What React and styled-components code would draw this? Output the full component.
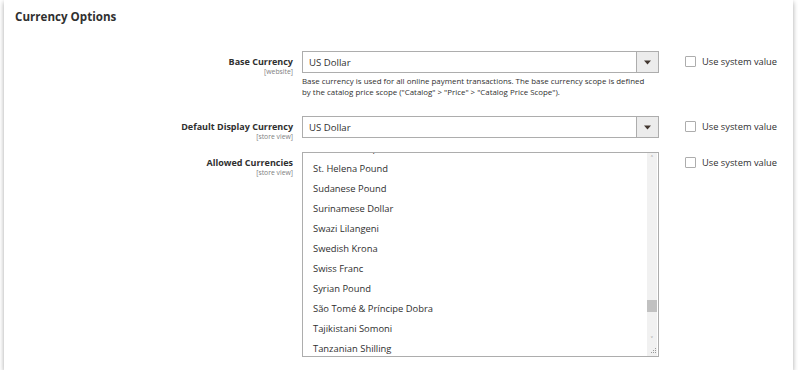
import React from 'react'
import styled, { createGlobalStyle } from 'styled-components'

const GlobalStyle = createGlobalStyle`
body{
    margin:0;
    background:#fff;
    font-family:"Open Sans", "Noto Sans", sans-serif;
    color:#303030;
}
`;

const currencies = [
    'Sri Lankan Rupee',
    'St. Helena Pound',
    'Sudanese Pound',
    'Surinamese Dollar',
    'Swazi Lilangeni',
    'Swedish Krona',
    'Swiss Franc',
    'Syrian Pound',
    'São Tomé & Príncipe Dobra',
    'Tajikistani Somoni',
    'Tanzanian Shilling',
];

function Caret() {
    return (
        <svg width="7" height="5" viewBox="0 0 7 5">
            <path d="M0 0.5h7L3.5 4.5z" fill="#41362f" />
        </svg>
    )
}

function UseSystem() {
    return (
        <SystemValue>
            <Box />
            <span>Use system value</span>
        </SystemValue>
    )
}

function App() {
    return (
        <>
            <GlobalStyle />
            <Card>
                <Title>Currency Options</Title>
                <Rows>
                    <Row gap={18}>
                        <Label>
                            <strong>Base Currency</strong>
                            <small>[website]</small>
                        </Label>
                        <Field>
                            <Select>
                                <span>US Dollar</span>
                                <Arrow><Caret /></Arrow>
                            </Select>
                            <Note>
                                Base currency is used for all online payment transactions. The base currency scope is defined by the catalog price scope ("Catalog" &gt; "Price" &gt; "Catalog Price Scope").
                            </Note>
                        </Field>
                        <UseSystem />
                    </Row>
                    <Row gap={14}>
                        <Label>
                            <strong>Default Display Currency</strong>
                            <small>[store view]</small>
                        </Label>
                        <Field>
                            <Select>
                                <span>US Dollar</span>
                                <Arrow><Caret /></Arrow>
                            </Select>
                        </Field>
                        <UseSystem />
                    </Row>
                    <Row>
                        <Label>
                            <strong>Allowed Currencies</strong>
                            <small>[store view]</small>
                        </Label>
                        <Field>
                            <MultiSelect>
                                <Options>
                                    <OptionsInner>
                                        {currencies.map(c => <Option key={c}>{c}</Option>)}
                                    </OptionsInner>
                                </Options>
                                <Scrollbar>
                                    <ScrollArrow>&#708;</ScrollArrow>
                                    <Track>
                                        <Thumb style={{ top: '135px' }} />
                                    </Track>
                                    <ScrollArrow>&#709;</ScrollArrow>
                                    <Grip>
                                        <svg width="6" height="6" viewBox="0 0 6 6">
                                            <rect x="4" y="0" width="1" height="1" fill="#999" />
                                            <rect x="2" y="2" width="1" height="1" fill="#999" />
                                            <rect x="4" y="2" width="1" height="1" fill="#999" />
                                            <rect x="0" y="4" width="1" height="1" fill="#999" />
                                            <rect x="2" y="4" width="1" height="1" fill="#999" />
                                            <rect x="4" y="4" width="1" height="1" fill="#999" />
                                        </svg>
                                    </Grip>
                                </Scrollbar>
                            </MultiSelect>
                        </Field>
                        <UseSystem />
                    </Row>
                </Rows>
            </Card>
        </>
    )
}

export default App

const Card = styled.div`
margin:0 5px 0 4px;
height:370px;
box-sizing:border-box;
background:#fff;
box-shadow:0 2px 5px rgba(0,0,0,.35);
padding:8px 0 0 11px;
`;

const Title = styled.h2`
margin:0;
font-size:11.6px;
font-weight:700;
line-height:17px;
color:#303030;
`;

const Rows = styled.div`
display:flex;
flex-direction:column;
margin-top:26px;
`;

const Row = styled.div`
display:grid;
grid-template-columns:278px 357px auto;
column-gap:9px;
align-items:start;
margin-bottom:${props => props.gap || 19}px;
`;

const Label = styled.div`
display:flex;
flex-direction:column;
align-items:flex-end;
height:22px;
padding-top:5px;
box-sizing:border-box;
strong{
    font-size:9px;
    font-weight:700;
    line-height:11px;
    color:#303030;
}
small{
    font-size:6.8px;
    line-height:9px;
    color:#808080;
}
`;

const Field = styled.div`
display:flex;
flex-direction:column;
`;

const Select = styled.div`
height:22px;
box-sizing:border-box;
border:1px solid #adadad;
display:flex;
align-items:center;
justify-content:space-between;
font-size:9.6px;
color:#303030;
span{
    padding-left:6px;
}
`;

const Arrow = styled.div`
width:22px;
height:100%;
box-sizing:border-box;
border-left:1px solid #adadad;
background:#ececec;
display:flex;
align-items:center;
justify-content:center;
`;

const Note = styled.div`
font-size:7.9px;
line-height:11px;
margin-top:3px;
padding-right:8px;
color:#303030;
`;

const SystemValue = styled.label`
display:flex;
align-items:flex-start;
gap:6px;
margin-left:17px;
padding-top:4px;
font-size:9.3px;
line-height:13px;
color:#303030;
`;

const Box = styled.span`
width:11px;
height:11px;
margin-top:1px;
box-sizing:border-box;
border:1px solid #adadad;
border-radius:1px;
background:#fff;
`;

const MultiSelect = styled.div`
height:205px;
box-sizing:border-box;
border:1px solid #adadad;
display:flex;
`;

const Options = styled.div`
flex:1;
overflow:hidden;
`;

const OptionsInner = styled.div`
margin-top:-14px;
`;

const Option = styled.div`
height:20px;
line-height:20px;
padding-left:10px;
font-size:9.4px;
color:#303030;
white-space:nowrap;
`;

const Scrollbar = styled.div`
width:10px;
margin-right:1px;
background:#f1f1f1;
display:flex;
flex-direction:column;
align-items:center;
`;

const ScrollArrow = styled.div`
height:12px;
font-size:8px;
line-height:12px;
color:#8a8a8a;
`;

const Track = styled.div`
flex:1;
width:100%;
position:relative;
`;

const Thumb = styled.div`
position:absolute;
left:0;
right:0;
height:12px;
background:#c1c1c1;
`;

const Grip = styled.div`
height:10px;
display:flex;
align-items:center;
justify-content:flex-end;
width:100%;
`;
